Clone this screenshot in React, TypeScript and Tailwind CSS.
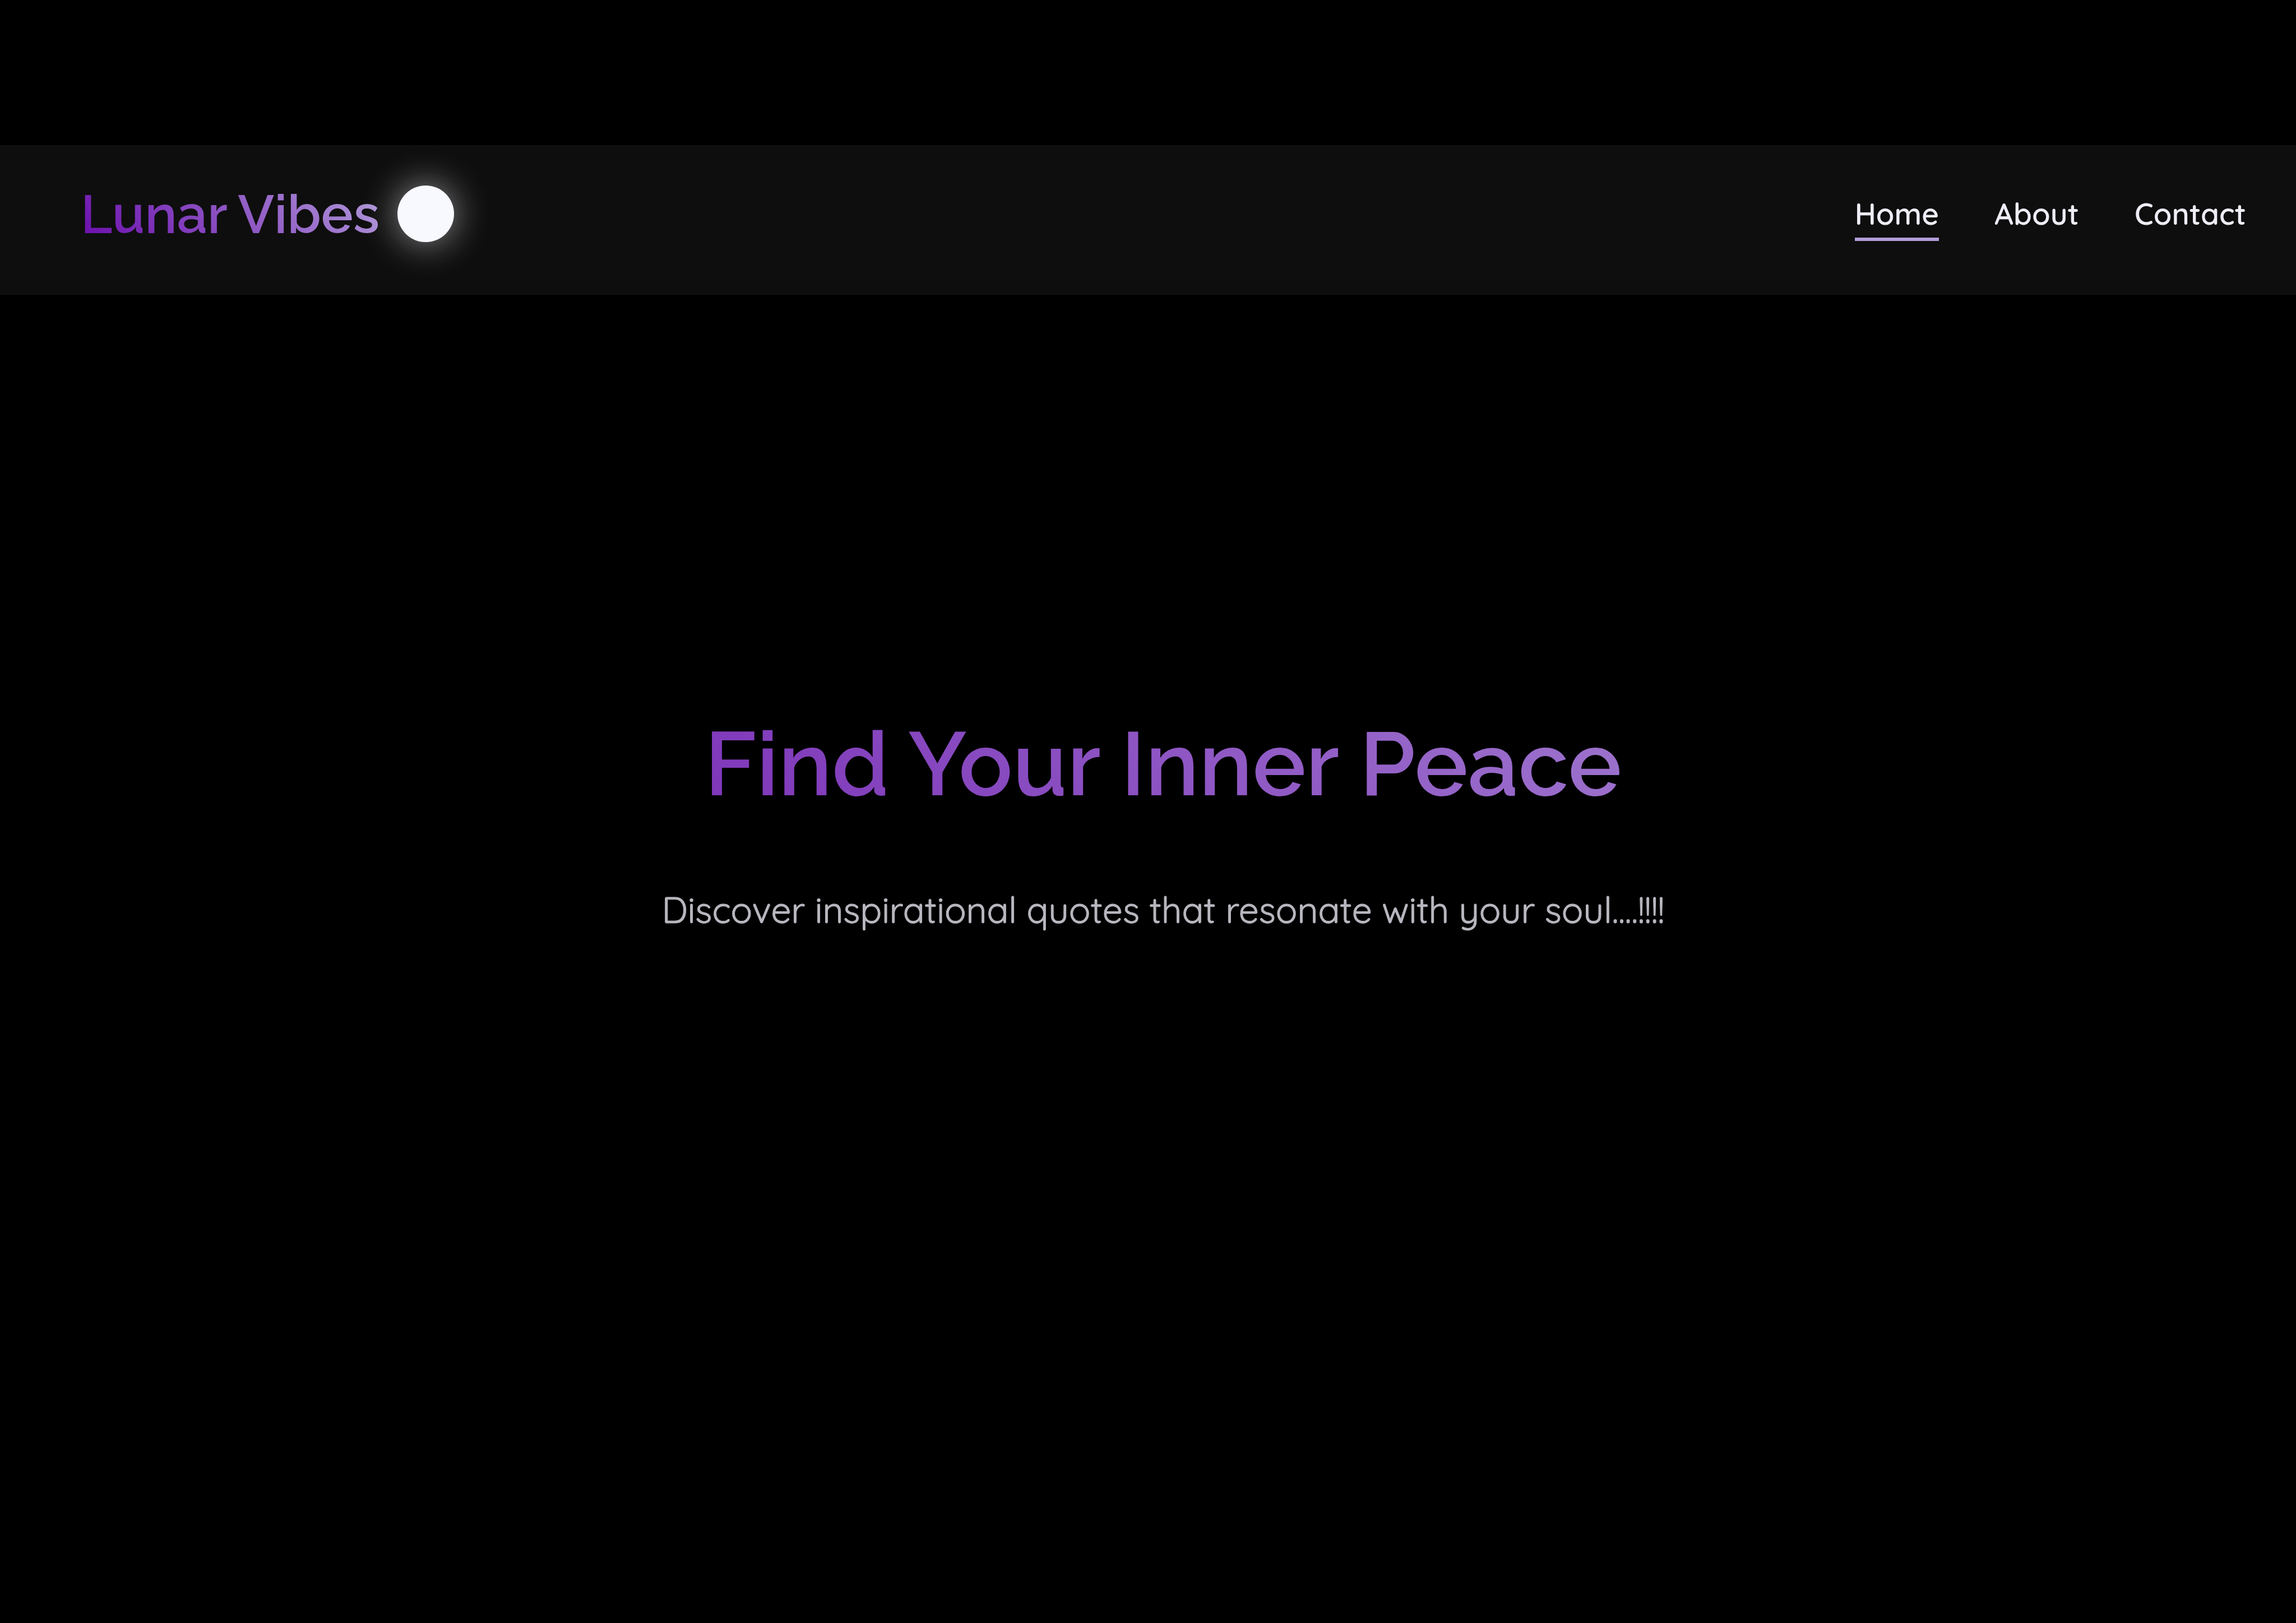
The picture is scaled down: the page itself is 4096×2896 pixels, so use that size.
const links = [
  { label: "Home", href: "#home", active: true },
  { label: "About", href: "#about", active: false },
  { label: "Contact", href: "#contact", active: false },
];

function Logo() {
  return (
    <a href="#home" className="flex items-center gap-8">
      <span className="bg-linear-45/srgb from-[#6a0dad] to-[#b19cd9] bg-clip-text font-[Raleway,sans-serif] text-[96px] leading-[100px] font-semibold text-transparent">
        Lunar Vibes
      </span>
      <span
        aria-hidden="true"
        className="size-[101px] rounded-full bg-[#f8f8ff] shadow-[0_0_66px_rgba(248,248,255,0.6)]"
      />
    </a>
  );
}

function Navigation() {
  return (
    <nav aria-label="Main">
      <ul className="flex items-center gap-[99px]">
        {links.map((link) => (
          <li key={link.label}>
            <a
              href={link.href}
              aria-current={link.active ? "page" : undefined}
              className="block border-b-[6px] border-transparent pt-[14px] pb-[10px] text-[53px] leading-[66px] font-semibold text-[#eeecf5] aria-[current=page]:border-b-[#b19cd9]"
            >
              {link.label}
            </a>
          </li>
        ))}
      </ul>
    </nav>
  );
}

export default function App() {
  return (
    <div className="flex min-h-screen flex-col bg-black pt-[259px] font-[Quicksand,sans-serif]">
      <header className="flex items-center justify-between bg-[#0e0e0e] pt-[72px] pr-[89px] pb-[94px] pl-36">
        <Logo />
        <Navigation />
      </header>
      <main className="flex-1 pt-[742px] pl-[54px] text-center">
        <h1 className="bg-linear-45/srgb from-[#6a0dad] to-[#b19cd9] bg-clip-text font-[Raleway,sans-serif] text-[160px] leading-[190px] font-semibold text-transparent">
          Find Your Inner Peace
        </h1>
        <p className="mt-[125px] text-[64px] leading-[80px] text-[#b8b6be] [-webkit-text-stroke:1px_#b8b6be]">
          Discover inspirational quotes that resonate with your soul....!!!!
        </p>
      </main>
    </div>
  );
}
